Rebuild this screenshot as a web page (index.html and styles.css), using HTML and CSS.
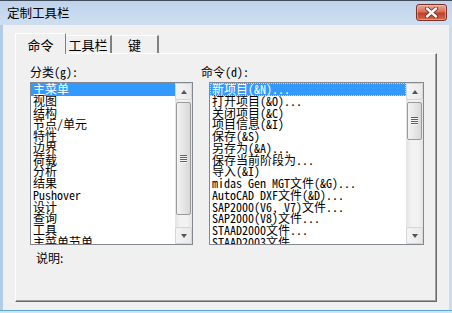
FILE: index.html
```html
<!DOCTYPE html>
<html lang="zh-CN">
<head>
  <meta charset="UTF-8">
  <title>定制工具栏</title>
  <link rel="stylesheet" href="styles.css">
</head>
<body>
  <div class="window">
    <div class="titlebar">
      <span class="title">定制工具栏</span>
      <div class="close">
        <svg width="15" height="11" viewBox="0 0 15 11">
          <path d="M3 1.5 L12 9.5 M12 1.5 L3 9.5" stroke="#6b2418" stroke-width="4" stroke-linecap="round"/>
          <path d="M3 1.5 L12 9.5 M12 1.5 L3 9.5" stroke="#fff" stroke-width="2.4" stroke-linecap="round"/>
        </svg>
      </div>
    </div>

    <div class="client">
      <div class="tabs">
        <div class="tab active">命令</div>
        <div class="tab t2">工具栏</div>
        <div class="tab t3">键</div>
      </div>

      <div class="panel">
        <div class="lists">
          <div class="group">
            <div class="label">分类(g):</div>
            <div class="listbox">
              <ul class="items">
                <li class="selected">主菜单</li>
                <li>视图</li>
                <li>结构</li>
                <li>节点/单元</li>
                <li>特性</li>
                <li>边界</li>
                <li>荷载</li>
                <li>分析</li>
                <li>结果</li>
                <li>Pushover</li>
                <li>设计</li>
                <li>查询</li>
                <li>工具</li>
                <li>主菜单节单</li>
              </ul>
              <div class="scrollbar">
                <div class="sb-btn up"></div>
                <div class="sb-track"><div class="thumb thumb-long"></div></div>
                <div class="sb-btn down"></div>
              </div>
            </div>
          </div>

          <div class="group group-right">
            <div class="label label-right">命令(d):</div>
            <div class="listbox">
              <ul class="items">
                <li class="selected focused">新项目(&amp;N)...</li>
                <li>打开项目(&amp;O)...</li>
                <li>关闭项目(&amp;C)</li>
                <li>项目信息(&amp;I)</li>
                <li>保存(&amp;S)</li>
                <li>另存为(&amp;A)...</li>
                <li>保存当前阶段为...</li>
                <li>导入(&amp;I)</li>
                <li>midas Gen MGT文件(&amp;G)...</li>
                <li>AutoCAD DXF文件(&amp;D)...</li>
                <li>SAP2000(V6, V7)文件...</li>
                <li>SAP2000(V8)文件...</li>
                <li>STAAD2000文件...</li>
                <li>STAAD2003文件...</li>
              </ul>
              <div class="scrollbar">
                <div class="sb-btn up"></div>
                <div class="sb-track"><div class="thumb thumb-short"></div></div>
                <div class="sb-btn down"></div>
              </div>
            </div>
          </div>
        </div>

        <div class="desc">说明:</div>
      </div>
    </div>
    <div class="frame-bottom"></div>
  </div>
</body>
</html>
```

FILE: styles.css
```css
html, body {
  margin: 0;
  padding: 0;
}
body {
  width: 452px;
  height: 313px;
  overflow: hidden;
  font-family: "Noto Sans Mono CJK SC", "Noto Sans CJK SC", "Liberation Mono", monospace;
  font-size: 12px;
  color: #000;
  background: #c9dbef;
}
.window {
  width: 452px;
  height: 313px;
  box-sizing: border-box;
  border-top: 1px solid #3f4b58;
  background: linear-gradient(90deg, #b3cbe6 0, #c6d8ed 30px, #cbdcef 100%);
}

/* 标题栏 */
.titlebar {
  height: 24px;
  display: flex;
  align-items: center;
  justify-content: space-between;
  padding: 0 5px 0 7px;
  background: linear-gradient(#bfd3ea, #cfdff1);
}
.title {
  font-family: "Noto Sans CJK SC", sans-serif;
  font-size: 12.5px;
  color: #000;
  margin-top: -1px;
}
.close {
  width: 29px;
  height: 15px;
  margin-top: -1px;
  display: flex;
  align-items: center;
  justify-content: center;
  border: 1px solid #7d3026;
  border-radius: 3px;
  background: linear-gradient(#e9a997 0, #d6705a 45%, #c0412a 55%, #d46a4e 100%);
  box-shadow: inset 0 0 0 1px rgba(255, 210, 200, 0.45);
}

/* 客户区 */
.client {
  margin: 0 3px;
  height: 285px;
  background: #f0f0f0;
  padding-top: 8px;
  box-sizing: border-box;
}
.tabs {
  display: flex;
  align-items: flex-end;
  margin-left: 12px;
  height: 20px;
  position: relative;
  z-index: 1;
}
.tab {
  height: 18px;
  box-sizing: border-box;
  display: flex;
  align-items: center;
  justify-content: center;
  font-family: "Noto Sans CJK SC", sans-serif;
  font-size: 13px;
  border-top: 1px solid #fff;
  border-right: 2px solid #808080;
  background: #f0f0f0;
}
.tab.active {
  width: 51px;
  height: 21px;
  border-left: 1px solid #fff;
  border-right: 1px solid #808080;
  margin-bottom: -1px;
  padding-top: 1px;
}
.t2 { width: 46px; }
.t3 { width: 47px; }

.panel {
  margin-left: 12px;
  width: 422px;
  height: 249px;
  box-sizing: border-box;
  border-top: 1px solid #fff;
  border-left: 1px solid #fff;
  border-right: 1px solid #696969;
  border-bottom: 1px solid #696969;
  box-shadow: inset -1px -1px 0 #a0a0a0;
  padding: 12px 0 0 14px;
}
.lists {
  display: grid;
  grid-template-columns: 163px 215px;
  column-gap: 16px;
}
.label {
  height: 12px;
  line-height: 12px;
  margin-bottom: 4px;
  white-space: nowrap;
}
.label-right {
  margin-left: -8px;
}

.listbox {
  height: 163px;
  box-sizing: border-box;
  border: 1px solid #828790;
  background: #fff;
  display: flex;
  overflow: hidden;
}
.items {
  list-style: none;
  margin: 0;
  padding: 0;
  flex: 1;
  overflow: hidden;
}
.items li {
  height: 11.75px;
  line-height: 11.75px;
  padding-left: 2px;
  white-space: nowrap;
}
.items li.selected {
  background: #3399ff;
  color: #fff;
  height: 12.5px;
  margin-bottom: -0.75px;
}
.items li.focused {
  outline: 1px dotted #b7dcff;
  outline-offset: -1px;
}

/* 滚动条 */
.scrollbar {
  width: 17px;
  display: flex;
  flex-direction: column;
  background: linear-gradient(90deg, #e2e2e2, #f2f2f2 30%, #f2f2f2 70%, #e6e6e6);
}
.sb-btn {
  height: 17px;
  box-sizing: border-box;
  border: 1px solid #d6d6d6;
  border-radius: 2px;
  background: linear-gradient(90deg, #f4f4f4, #e9e9e9);
  display: flex;
  align-items: center;
  justify-content: center;
}
.sb-btn::before {
  content: "";
  width: 0;
  height: 0;
  border-left: 3.5px solid transparent;
  border-right: 3.5px solid transparent;
}
.up::before {
  border-bottom: 4px solid #555;
}
.down::before {
  border-top: 4px solid #555;
}
.sb-track {
  flex: 1;
  padding-top: 2px;
}
.thumb {
  box-sizing: border-box;
  border: 1px solid #9a9a9a;
  border-radius: 2px;
  margin: 0 1px;
  background: linear-gradient(90deg, #f3f3f3, #e6e6e6 50%, #d8d8d8);
  display: flex;
  align-items: center;
  justify-content: center;
}
.thumb::after {
  content: "";
  width: 7px;
  height: 8px;
  background: repeating-linear-gradient(#5f5f5f 0, #5f5f5f 1px, #f6f6f6 1px, #f6f6f6 2px);
}
.thumb-long { height: 113px; }
.thumb-short { height: 38px; }

.desc {
  margin: 7px 0 0 6px;
  height: 12px;
  line-height: 12px;
  font-family: "Noto Sans CJK SC", sans-serif;
}

.frame-bottom {
  height: 3px;
  border-top: 1px solid #5aaad6;
  background: #d4e4f3;
}
```
